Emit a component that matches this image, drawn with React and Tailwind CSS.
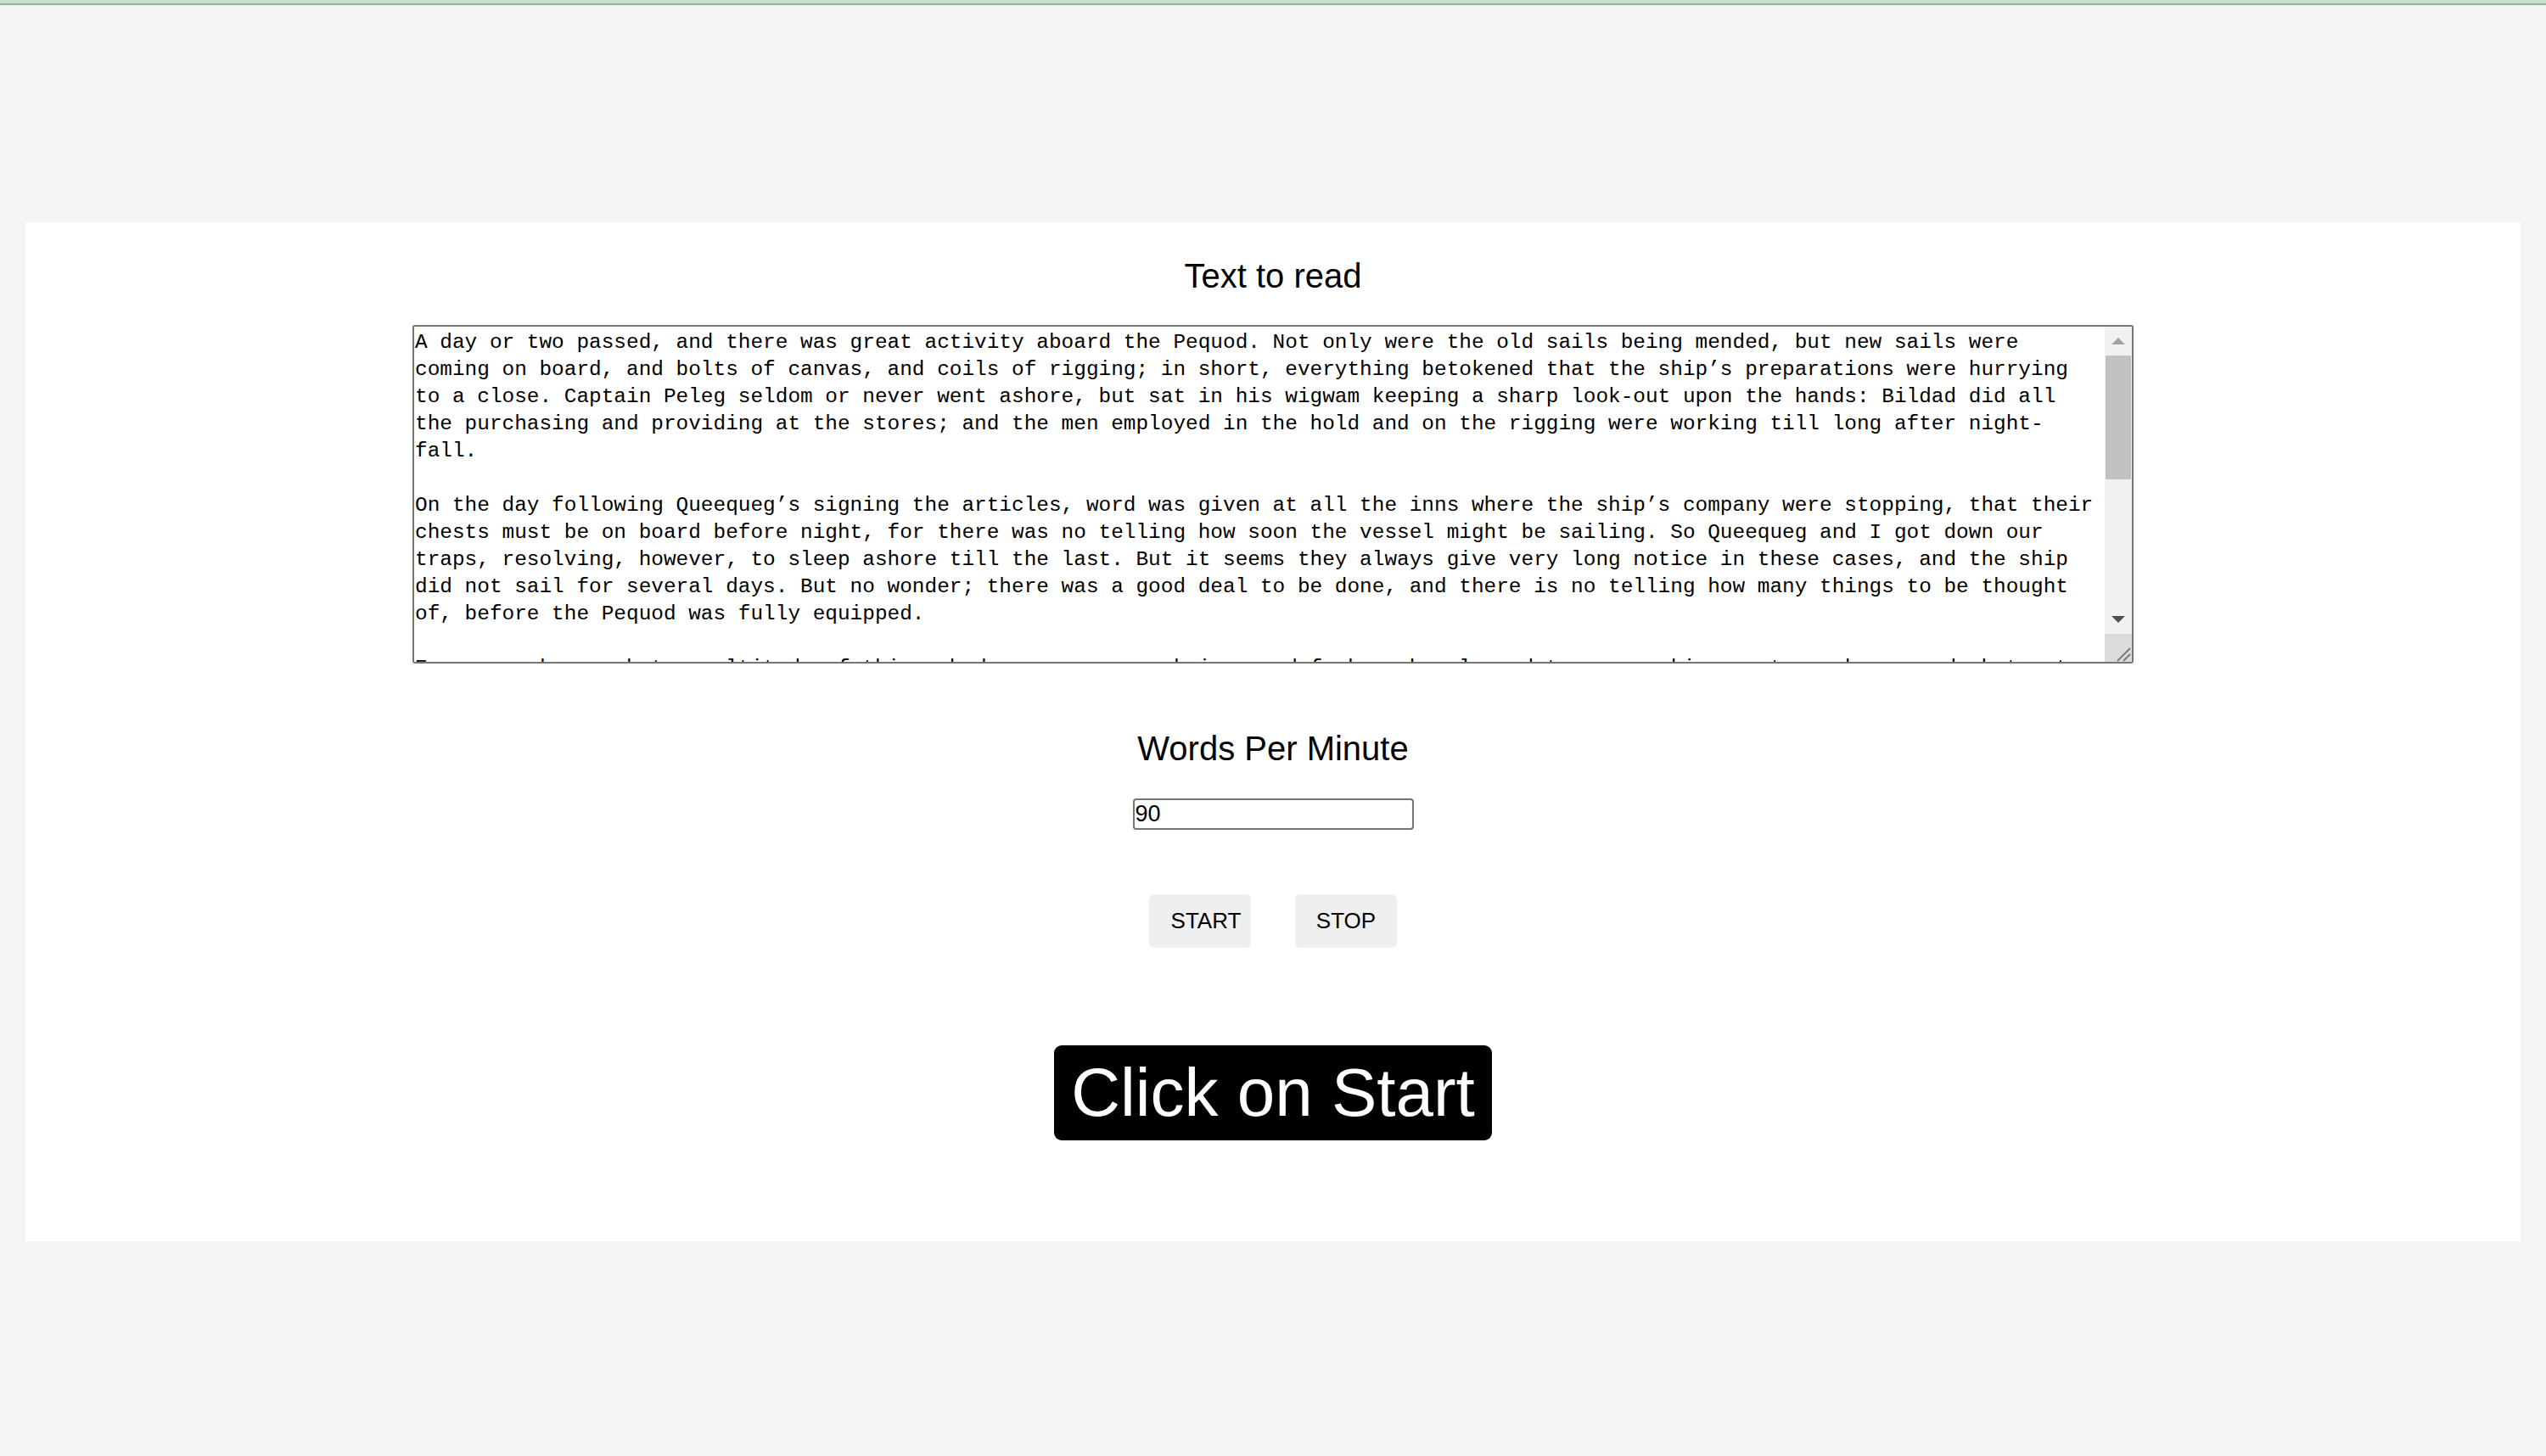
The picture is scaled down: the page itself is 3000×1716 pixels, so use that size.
import { useState } from "react";

const passage = `A day or two passed, and there was great activity aboard the Pequod. Not only were the old sails being mended, but new sails were coming on board, and bolts of canvas, and coils of rigging; in short, everything betokened that the ship’s preparations were hurrying to a close. Captain Peleg seldom or never went ashore, but sat in his wigwam keeping a sharp look-out upon the hands: Bildad did all the purchasing and providing at the stores; and the men employed in the hold and on the rigging were working till long after night-fall.

On the day following Queequeg’s signing the articles, word was given at all the inns where the ship’s company were stopping, that their chests must be on board before night, for there was no telling how soon the vessel might be sailing. So Queequeg and I got down our traps, resolving, however, to sleep ashore till the last. But it seems they always give very long notice in these cases, and the ship did not sail for several days. But no wonder; there was a good deal to be done, and there is no telling how many things to be thought of, before the Pequod was fully equipped.

Every one knows what a multitude of things—beds, sauce-pans, knives and forks, shovels and tongs, napkins, nut-crackers, and what not, are indispensable to the business of housekeeping. Just so with whaling, which necessitates a three-years’ housekeeping upon the wide ocean, far from all grocers, costermongers, doctors, bakers, and bankers.`;

function FakeScrollbar() {
  return (
    <div className="w-[32px] flex flex-col bg-[#f1f1f1]">
      {/* up arrow (disabled look) */}
      <div className="h-[34px] flex items-center justify-center">
        <svg width="16" height="8" viewBox="0 0 16 8">
          <polygon points="0,8 8,0 16,8" fill="#a3a3a3" />
        </svg>
      </div>
      <div className="flex-1">
        <div className="mx-[1px] h-[146px] bg-[#c1c1c1]" />
      </div>
      {/* down arrow */}
      <div className="h-[34px] flex items-center justify-center">
        <svg width="16" height="8" viewBox="0 0 16 8">
          <polygon points="0,0 16,0 8,8" fill="#505050" />
        </svg>
      </div>
      {/* resize corner */}
      <div className="h-[33px] bg-[#dcdcdc]">
        <svg width="32" height="33" viewBox="0 0 32 33">
          <line x1="15" y1="32" x2="30" y2="17" stroke="#7a7a7a" strokeWidth="2" />
          <line x1="22" y1="32" x2="30" y2="24" stroke="#7a7a7a" strokeWidth="2" />
        </svg>
      </div>
    </div>
  );
}

export default function App() {
  const [wpm, setWpm] = useState("90");

  return (
    <div className="min-h-screen bg-[#f4f4f4] font-['Liberation_Sans',Arial,sans-serif] text-black">
      {/* top strip */}
      <div className="h-[4px] bg-[#c5e1c5]" />
      <div className="h-[2px] bg-[#9db09d]" />

      <div className="pt-[256px]">
        <div className="mx-[30px] bg-white flex flex-col items-center pt-[40px] pb-[119px]">
          <h2 className="text-[40px] leading-[46px]">Text to read</h2>

          <div className="mt-[35px] w-[2028px] h-[399px] flex border-2 border-[#767676] rounded-[3px] overflow-hidden">
            <textarea
              defaultValue={passage}
              spellCheck={false}
              className="flex-1 h-full resize-none overflow-hidden outline-none pl-[1px] pr-[5px] pt-[3px] font-['Liberation_Mono','Courier_New',monospace] text-[24.42px] leading-[32px] text-black"
            />
            <FakeScrollbar />
          </div>

          <h2 className="mt-[77px] text-[40px] leading-[46px]">Words Per Minute</h2>

          <input
            type="text"
            value={wpm}
            onChange={(e) => setWpm(e.target.value)}
            className="mt-[36px] w-[331px] h-[37px] border-2 border-[#767676] rounded-[4px] px-[1px] text-[27px] leading-[33px] outline-none"
          />

          <div className="mt-[76px] flex gap-[52px]">
            <button className="w-[120px] h-[63px] bg-[#efefef] rounded-[6px] text-[26px] pl-[14px]">
              START
            </button>
            <button className="w-[120px] h-[63px] bg-[#efefef] rounded-[6px] text-[26px]">
              STOP
            </button>
          </div>

          <div className="mt-[115px] bg-black text-white rounded-[9px] px-[20px] py-[10px] text-[80px] leading-[92px]">
            Click on Start
          </div>
        </div>
      </div>
    </div>
  );
}
